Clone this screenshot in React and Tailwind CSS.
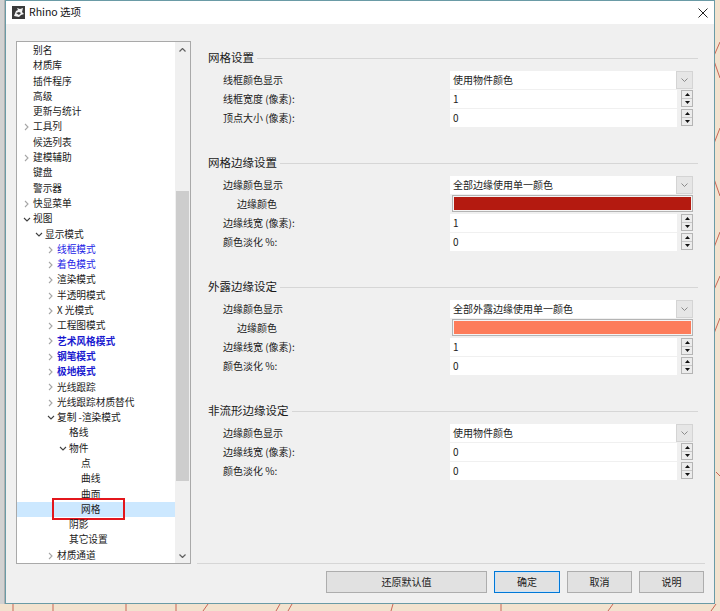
import React from "react";

const tree = [
  { t: "别名", l: 0 },
  { t: "材质库", l: 0 },
  { t: "插件程序", l: 0 },
  { t: "高级", l: 0 },
  { t: "更新与统计", l: 0 },
  { t: "工具列", l: 0, c: "closed" },
  { t: "候选列表", l: 0 },
  { t: "建模辅助", l: 0, c: "closed" },
  { t: "键盘", l: 0 },
  { t: "警示器", l: 0 },
  { t: "快显菜单", l: 0, c: "closed" },
  { t: "视图", l: 0, c: "open" },
  { t: "显示模式", l: 1, c: "open" },
  { t: "线框模式", l: 2, c: "closed", blue: 1 },
  { t: "着色模式", l: 2, c: "closed", blue: 1 },
  { t: "渲染模式", l: 2, c: "closed" },
  { t: "半透明模式", l: 2, c: "closed" },
  { t: "X 光模式", l: 2, c: "closed" },
  { t: "工程图模式", l: 2, c: "closed" },
  { t: "艺术风格模式", l: 2, c: "closed", blue: 2 },
  { t: "钢笔模式", l: 2, c: "closed", blue: 2 },
  { t: "极地模式", l: 2, c: "closed", blue: 2 },
  { t: "光线跟踪", l: 2, c: "closed" },
  { t: "光线跟踪材质替代", l: 2, c: "closed" },
  { t: "复制 -渲染模式", l: 2, c: "open" },
  { t: "格线", l: 3 },
  { t: "物件", l: 3, c: "open" },
  { t: "点", l: 4 },
  { t: "曲线", l: 4 },
  { t: "曲面", l: 4 },
  { t: "网格", l: 4, sel: true },
  { t: "阴影", l: 3 },
  { t: "其它设置", l: 3 },
  { t: "材质通道", l: 2, c: "closed" },
];

const indent = ["pl-[6px]", "pl-[18px]", "pl-[30px]", "pl-[42px]", "pl-[54px]"];

function Chevron({ state }) {
  if (state === "closed")
    return (
      <svg width="5" height="8" viewBox="0 0 5 8" className="ml-[1px]">
        <polyline points="1,1 4,4 1,7" fill="none" stroke="#a6a6a6" strokeWidth="1.1" />
      </svg>
    );
  if (state === "open")
    return (
      <svg width="8" height="5" viewBox="0 0 8 5">
        <polyline points="1,1 4,4 7,1" fill="none" stroke="#404040" strokeWidth="1.1" />
      </svg>
    );
  return null;
}

function TreeRow({ item }) {
  const color =
    item.blue === 2
      ? "text-[#1a1ad0] font-bold"
      : item.blue === 1
      ? "text-[#2323e6]"
      : "text-[#1a1a1a]";
  return (
    <div className={`relative h-[15.3px] flex items-center ${indent[item.l]} ${item.sel ? "bg-[#cce8ff]" : ""}`}>
      <div className="w-[10px] flex items-center">
        <Chevron state={item.c} />
      </div>
      <span className={`text-[9.7px] leading-none whitespace-nowrap ${color}`}>{item.t}</span>
      {item.sel && (
        <div className="absolute left-[35px] top-[-4px] w-[73px] h-[22px] border-2 border-[#e3161c]" />
      )}
    </div>
  );
}

function Group({ title, children }) {
  return (
    <div>
      <div className="flex items-center h-[16px] pl-[11px] pr-[7px]">
        <span className="text-[11.5px] leading-none text-[#1a1a1a]">{title}</span>
        <div className="flex-1 ml-[3px] border-t border-[#d6d6d6]" />
      </div>
      <div className="mt-[4px]">{children}</div>
    </div>
  );
}

function Row({ label, sub, children }) {
  return (
    <div className="flex items-center h-[19px]">
      <div className={`w-[253px] ${sub ? "pl-[40px]" : "pl-[26px]"} text-[10px] leading-none text-[#1a1a1a] whitespace-nowrap`}>
        {label}
      </div>
      <div className="w-[243px] flex items-center">{children}</div>
    </div>
  );
}

function Dropdown({ value }) {
  return (
    <div className="flex h-[18px] w-full">
      <div className="flex-1 bg-white flex items-center pl-[3px] text-[10px] leading-none text-[#1a1a1a] whitespace-nowrap">
        {value}
      </div>
      <div className="w-[17px] bg-[#e6e6e6] border border-[#d4d4d4] flex items-center justify-center">
        <svg width="7" height="4" viewBox="0 0 7 4">
          <polyline points="0.5,0.5 3.5,3.5 6.5,0.5" fill="none" stroke="#8a8a8a" strokeWidth="1" />
        </svg>
      </div>
    </div>
  );
}

function Spin({ value }) {
  return (
    <div className="flex items-center w-full h-[18px]">
      <div className="w-[227px] h-full bg-white flex items-center pl-[3px] text-[10px] leading-none text-[#1a1a1a]">
        {value}
      </div>
      <div className="ml-[4px] w-[12px] h-[17px] flex flex-col border border-[#b5b5b5] bg-[#ececec]">
        <div className="flex-1 flex items-center justify-center border-b border-[#c8c8c8]">
          <svg width="5" height="3" viewBox="0 0 5 3">
            <polygon points="0,3 2.5,0 5,3" fill="#111" />
          </svg>
        </div>
        <div className="flex-1 flex items-center justify-center">
          <svg width="5" height="3" viewBox="0 0 5 3">
            <polygon points="0,0 5,0 2.5,3" fill="#111" />
          </svg>
        </div>
      </div>
    </div>
  );
}

function Swatch({ color }) {
  return (
    <div className="ml-[2px] w-[241px] h-[17px] border border-[#b4b4b4] p-[1px] bg-[#f4f4f4]">
      <div className={`w-full h-full ${color}`} />
    </div>
  );
}

function Btn({ children, w, primary }) {
  return (
    <button
      className={`${w} h-[22px] text-[10px] leading-none text-[#1a1a1a] bg-[#e1e1e1] border ${
        primary ? "border-[#0078d7] shadow-[inset_0_0_0_1px_#cfe3f5]" : "border-[#adadad]"
      }`}
    >
      {children}
    </button>
  );
}

export default function App() {
  return (
    <div
      className="relative w-[720px] h-[611px] overflow-hidden bg-[#f2e2ce] flex items-start"
      style={{ fontFamily: '"Noto Sans CJK SC", "Noto Sans", sans-serif' }}
    >
      {/* background mesh peeking out */}
      <svg className="absolute inset-0" width="720" height="611" viewBox="0 0 720 611">
        <g fill="none" stroke="#c0483a" strokeWidth="1" opacity="0.8">
          <polyline points="720,42 713,58 720,78" />
          <polyline points="720,128 713,146 713,176 720,196" />
          <polyline points="720,232 713,250" />
          <polyline points="713,292 720,276" />
          <polyline points="720,318 713,336" />
          <line x1="716" y1="472" x2="720" y2="476" />
          <line x1="13" y1="604" x2="13" y2="611" />
          <line x1="53" y1="604" x2="53" y2="611" />
          <line x1="126" y1="604" x2="126" y2="611" />
          <line x1="176" y1="604" x2="176" y2="611" />
          <line x1="208" y1="604" x2="203" y2="611" />
          <line x1="280" y1="604" x2="276" y2="611" />
          <line x1="292" y1="604" x2="288" y2="611" />
          <line x1="393" y1="604" x2="391" y2="611" />
          <line x1="501" y1="604" x2="501" y2="611" />
          <line x1="613" y1="604" x2="608" y2="611" />
          <line x1="716" y1="604" x2="711" y2="611" />
        </g>
      </svg>

      {/* edge of the window behind */}
      <div className="relative w-[5px] h-[604px] bg-[#d2d2d2] border-r border-[#b0b0b0]" />

      {/* dialog */}
      <div className="relative z-10 w-[710px] h-[604px] border border-[#6a9ba6] bg-[#f0f0f0] flex flex-col">
        {/* title bar */}
        <div className="h-[23px] bg-white flex items-center">
          <svg width="13" height="13" viewBox="0 0 13 13" className="ml-[6px]">
            <rect x="0" y="0" width="13" height="13" fill="#3a3a3a" />
            <path d="M2 10 L4 5 L6 4 L5 2 L8 3 L11 2 L10 6 L12 8 L9 9 L7 11 Z" fill="#f4f4f4" />
            <path d="M4 7 L7 6 L9 7 L7 9 Z" fill="#3a3a3a" />
          </svg>
          <span className="ml-[4px] text-[10.5px] leading-none text-[#111]">Rhino 选项</span>
          <div className="flex-1" />
          <svg width="10" height="10" viewBox="0 0 10 10" className="mr-[6px]">
            <path d="M0.5 0.5 L9.5 9.5 M9.5 0.5 L0.5 9.5" stroke="#222" strokeWidth="1" />
          </svg>
        </div>

        {/* body */}
        <div className="flex flex-col pl-[10px] pr-[9px] pt-[17px]">
          <div className="flex h-[523px]">
            {/* tree */}
            <div className="w-[175px] h-full bg-white border border-[#a9a9a9] flex">
              <div className="flex-1 pt-[1.2px]">
                {tree.map((item, i) => (
                  <TreeRow key={i} item={item} />
                ))}
              </div>
              <div className="w-[15px] h-full bg-[#f0f0f0] flex flex-col">
                <div className="h-[15px] flex items-center justify-center">
                  <svg width="7" height="4" viewBox="0 0 7 4">
                    <polyline points="0.5,3.5 3.5,0.5 6.5,3.5" fill="none" stroke="#606060" strokeWidth="1.2" />
                  </svg>
                </div>
                <div className="flex-1 relative">
                  <div className="mt-[134px] mx-[1px] h-[290px] bg-[#cdcdcd]" />
                </div>
                <div className="h-[15px] flex items-center justify-center">
                  <svg width="7" height="4" viewBox="0 0 7 4">
                    <polyline points="0.5,0.5 3.5,3.5 6.5,0.5" fill="none" stroke="#606060" strokeWidth="1.2" />
                  </svg>
                </div>
              </div>
            </div>

            {/* settings */}
            <div className="ml-[6px] flex-1 h-full border-b border-[#d6d6d6] pt-[9px] flex flex-col gap-[28px]">
              <Group title="网格设置">
                <Row label="线框颜色显示"><Dropdown value="使用物件颜色" /></Row>
                <Row label="线框宽度 (像素):"><Spin value="1" /></Row>
                <Row label="顶点大小 (像素):"><Spin value="0" /></Row>
              </Group>
              <Group title="网格边缘设置">
                <Row label="边缘颜色显示"><Dropdown value="全部边缘使用单一颜色" /></Row>
                <Row label="边缘颜色" sub><Swatch color="bg-[#b41a10]" /></Row>
                <Row label="边缘线宽 (像素):"><Spin value="1" /></Row>
                <Row label="颜色淡化 %:"><Spin value="0" /></Row>
              </Group>
              <Group title="外露边缘设定">
                <Row label="边缘颜色显示"><Dropdown value="全部外露边缘使用单一颜色" /></Row>
                <Row label="边缘颜色" sub><Swatch color="bg-[#fd7c5a]" /></Row>
                <Row label="边缘线宽 (像素):"><Spin value="1" /></Row>
                <Row label="颜色淡化 %:"><Spin value="0" /></Row>
              </Group>
              <Group title="非流形边缘设定">
                <Row label="边缘颜色显示"><Dropdown value="使用物件颜色" /></Row>
                <Row label="边缘线宽 (像素):"><Spin value="0" /></Row>
                <Row label="颜色淡化 %:"><Spin value="0" /></Row>
              </Group>
            </div>
          </div>

          {/* buttons */}
          <div className="mt-[7px] flex justify-end gap-[7px] pr-[1px]">
            <Btn w="w-[161px]">还原默认值</Btn>
            <Btn w="w-[66px]" primary>确定</Btn>
            <Btn w="w-[65px]">取消</Btn>
            <Btn w="w-[65px]">说明</Btn>
          </div>
        </div>
      </div>
    </div>
  );
}
